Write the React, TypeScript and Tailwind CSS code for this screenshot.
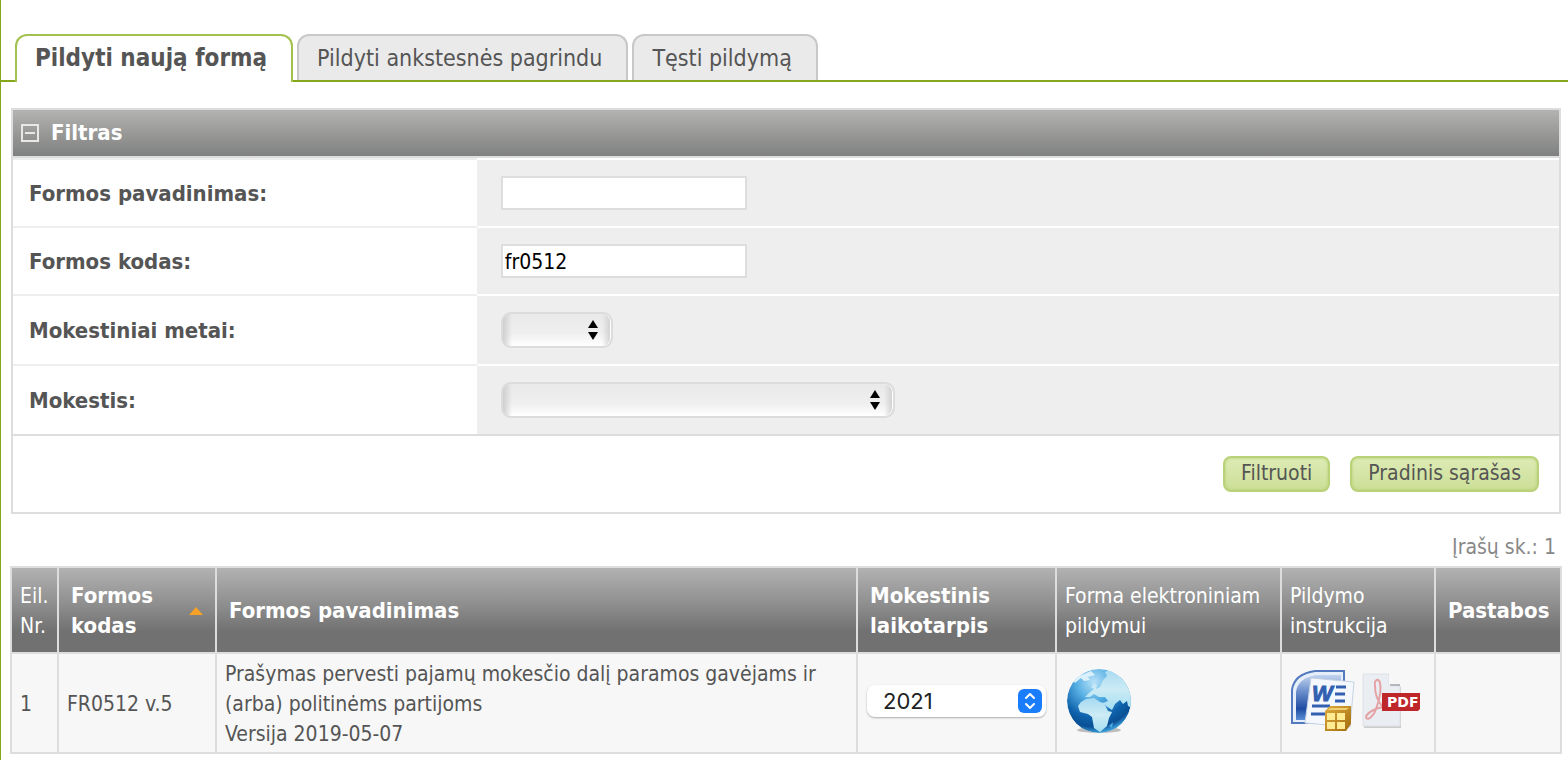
import { useState } from "react";
import type { ReactNode } from "react";
import clsx from "clsx";

const TABS = ["Pildyti naują formą", "Pildyti ankstesnės pagrindu", "Tęsti pildymą"];

function Tab({ label, active, onClick }: { label: string; active: boolean; onClick: () => void }) {
  return (
    <button
      type="button"
      role="tab"
      aria-selected={active}
      onClick={onClick}
      className={clsx(
        "rounded-t-xl border-2 border-b-0 pr-6 pl-[18px] leading-[44px]",
        active
          ? "-mb-[2px] border-[#a3c14f] bg-white pb-[2px] text-[24px] font-bold"
          : "border-[#c8c8c8] bg-[#eaeaea] text-[23px]",
      )}
    >
      {label}
    </button>
  );
}

function FilterRow({ id, label, children }: { id: string; label: string; children: ReactNode }) {
  return (
    <div className="flex">
      <label
        htmlFor={id}
        className="flex w-[30%] items-center border-t-2 border-[#eeeeee] px-4 pt-[2px] text-[22px] font-bold"
      >
        {label}
      </label>
      <div className="flex-1 border-t-2 border-white bg-[#eeeeee] px-6 py-4">{children}</div>
    </div>
  );
}

function TextField({ id, defaultValue }: { id: string; defaultValue?: string }) {
  return (
    <input
      id={id}
      type="text"
      defaultValue={defaultValue}
      className="block h-[34px] w-[246px] border-2 border-[#dddddd] bg-white px-[2px] pt-[2px] text-black outline-none"
    />
  );
}

function GreySelect({ id, className }: { id: string; className: string }) {
  return (
    <div className={clsx("relative h-9", className)}>
      <select
        id={id}
        className="h-full w-full appearance-none rounded-[10px] border-2 border-[#dcdcdc] bg-[linear-gradient(90deg,#cfcfcf,transparent_9px,transparent_calc(100%-9px),#cfcfcf),linear-gradient(#e9e9e9,#efefef_60%,#ffffff)] shadow-[inset_-1px_0_0_#ffffff] outline-none"
      >
        <option value="" />
      </select>
      <svg
        className="pointer-events-none absolute top-2 right-[15px]"
        width="10"
        height="20"
        viewBox="0 0 10 20"
      >
        <path d="M5 0 10 8H0ZM5 20 0 12H10Z" />
      </svg>
    </div>
  );
}

function GreenButton({ children }: { children: ReactNode }) {
  return (
    <button
      type="button"
      className="h-9 rounded-lg border-2 border-[#b9d27a] bg-linear-to-b from-[#deebb5] to-[#cbdf97] px-4 pb-[2px] leading-7 shadow-[inset_0_0_3px_#b4ce70]"
    >
      {children}
    </button>
  );
}

function GlobeIcon() {
  return (
    <svg className="block" width="66" height="66" viewBox="0 0 66 66" aria-hidden="true">
      <defs>
        <radialGradient id="sea" cx="42%" cy="20%" r="80%">
          <stop offset="0" stopColor="#b9e2f8" />
          <stop offset=".35" stopColor="#55aee3" />
          <stop offset=".7" stopColor="#0e62ab" />
          <stop offset=".88" stopColor="#0a4f94" />
          <stop offset="1" stopColor="#3fa4df" />
        </radialGradient>
        <linearGradient id="land" x1="0" y1="0" x2="0" y2="1">
          <stop offset="0" stopColor="#a8daf2" />
          <stop offset=".5" stopColor="#ccebf5" />
          <stop offset="1" stopColor="#a5def2" />
        </linearGradient>
        <clipPath id="ball">
          <circle cx="33" cy="33" r="32" />
        </clipPath>
      </defs>
      <ellipse cx="33" cy="62" rx="22" ry="3" fill="#bdbdbd" />
      <g clipPath="url(#ball)">
        <circle cx="33" cy="33" r="32" fill="url(#sea)" />
        <path
          d="M39 4 45 1 66 14V40L62 38 61 33 57 36 54 32 49 36 46 42 40 38 37 35 42 33 39 29 33 29 28 26 24 29 19 29 23 25 28 21 25 19 28 15 31 17 30 21 34 19 37 12 41 8Z"
          fill="url(#land)"
        />
        <path
          d="M20 31 28 30 34 34 38 35 42 43 46 44 43 50 41 58 34 64 28 60 26 49 22 46 14 44 12 38 15 34Z"
          fill="url(#land)"
        />
        <path d="M7 12 12 8 18 6 25 3 29 7 22 9 24 12 18 13 15 10 9 15Z" fill="#d9f0fa" />
        <path d="M43 58 47 54 46 60Z" fill="#4aa9dd" />
      </g>
    </svg>
  );
}

function WordIcon() {
  return (
    <svg className="block" width="64" height="62" viewBox="0 0 64 62" aria-hidden="true">
      <defs>
        <linearGradient id="wordBlue" x1="0" y1="0" x2="0" y2="1">
          <stop offset="0" stopColor="#c3d4ee" />
          <stop offset=".35" stopColor="#6f92ce" />
          <stop offset=".75" stopColor="#1f4ca3" />
          <stop offset="1" stopColor="#5c8fd6" />
        </linearGradient>
        <linearGradient id="gold" x1="0" y1="0" x2="1" y2="1">
          <stop offset="0" stopColor="#dfac3f" />
          <stop offset="1" stopColor="#a36b0e" />
        </linearGradient>
      </defs>
      <path d="M1 53V20Q3 4 24 1H53V53Z" fill="#e6eefa" stroke="#5379be" strokeWidth="2" />
      <path d="M5 50V22Q7 8 25 5H50V50Z" fill="url(#wordBlue)" />
      <path d="M20 8 63 12 59 57 14 53Z" fill="#f4f8fd" stroke="#c6d3e4" />
      <text
        x="21"
        y="31"
        fontSize="22"
        fontWeight="bold"
        fontStyle="italic"
        fontFamily="Liberation Sans, sans-serif"
        fill="#335fb0"
        stroke="#335fb0"
      >
        W
      </text>
      <path
        d="M45 17H55M44 24H54M44 31H54M21 36H39M20 44H36"
        stroke="#335fb0"
        strokeWidth="3"
      />
      <path d="M34 41 39 36H60V54L55 61H34Z" fill="url(#gold)" />
      <path d="M36 43H44V50H36ZM46 43H54V50H46ZM36 52H44V59H36ZM46 52H54V59H46Z" fill="#ffeb91" />
      <path d="M36 40 40 38H58L55 40Z" fill="#f0ce72" />
    </svg>
  );
}

function PdfIcon() {
  return (
    <svg className="block" width="60" height="56" viewBox="0 0 60 56" aria-hidden="true">
      <path d="M3 3H29L40 14V55H3Z" fill="#cccccc" />
      <path d="M2 1H28V13H39V53H2Z" fill="#eaeef3" stroke="#dde1e7" />
      <path d="M28 1 39 13H28Z" fill="#f7f7f7" />
      <path d="M29 12H39" stroke="#b4b8bc" strokeWidth="2" />
      <path
        d="M22 34C16 35 6 39 5 44C6 49 13 43 15 36C18 28 21 19 19 10C18 5 13 6 14 13C14 21 16 28 22 34Z"
        fill="none"
        stroke="#e5a2a5"
        strokeWidth="2"
      />
      <path d="M21 20H59V36L57 38H21Z" fill="#bf2629" />
      <text
        x="26"
        y="34"
        fontSize="14"
        fontWeight="bold"
        fontFamily="DejaVu Sans, sans-serif"
        fill="#ffffff"
      >
        PDF
      </text>
    </svg>
  );
}

const HEAD_CELL = "border-2 border-[#dddddd] px-2 pt-[13px] pb-[11px]";
const HEAD_SORT = "border-2 border-[#dddddd] px-3 pt-[13px] pb-[11px] text-[22px] font-bold";
const CELL = "border-2 border-[#dddddd] px-2 pt-[5px] pb-[3px]";
const ICON_CELL = "border-2 border-[#dddddd] px-[9px] pb-1";

export default function App() {
  const [tab, setTab] = useState(0);
  const [open, setOpen] = useState(true);

  return (
    <main className="min-h-screen border-l border-[#86a71c] bg-white pt-[34px] font-['DejaVu_Sans_Condensed','DejaVu_Sans',sans-serif] text-[21px] leading-[30px] text-[#555555]">
      <div role="tablist" className="flex gap-1 border-b-2 border-[#86a71c] pl-[14px]">
        {TABS.map((label, i) => (
          <Tab key={label} label={label} active={i === tab} onClick={() => setTab(i)} />
        ))}
      </div>

      <form
        className="mt-[26px] mr-[7px] ml-[10px] border-2 border-[#dddddd]"
        onSubmit={(e) => e.preventDefault()}
      >
        <button
          type="button"
          aria-expanded={open}
          onClick={() => setOpen(!open)}
          className="flex h-12 w-full items-center gap-3 border-b-2 border-[#dddddd] bg-linear-to-b from-[#b3b3b3] via-[#999997] to-[#7f8081] px-2 text-[22px] font-bold text-white"
        >
          <svg width="18" height="18" viewBox="0 0 18 18" fill="none" stroke="#e8e8e8" strokeWidth="2">
            <path d="M1 1H17V17H1ZM4 9H14" />
          </svg>
          Filtras
        </button>
        {open && (
          <>
            <div>
              <FilterRow id="name" label="Formos pavadinimas:">
                <TextField id="name" />
              </FilterRow>
              <FilterRow id="code" label="Formos kodas:">
                <TextField id="code" defaultValue="fr0512" />
              </FilterRow>
              <FilterRow id="year" label="Mokestiniai metai:">
                <GreySelect id="year" className="w-28" />
              </FilterRow>
              <FilterRow id="tax" label="Mokestis:">
                <GreySelect id="tax" className="w-[394px]" />
              </FilterRow>
            </div>
            <div className="flex justify-end gap-5 border-t-2 border-[#dddddd] bg-white px-5 py-5">
              <GreenButton>Filtruoti</GreenButton>
              <GreenButton>Pradinis sąrašas</GreenButton>
            </div>
          </>
        )}
      </form>

      <p className="mt-[18px] pr-3 pb-1 text-right text-[#888888]">Įrašų sk.: 1</p>

      <div className="mr-[6px] ml-[9px]">
        <table className="w-full table-fixed border-collapse text-left">
          <colgroup>
            <col className="w-[47px]" />
            <col className="w-[158px]" />
            <col />
            <col className="w-[199px]" />
            <col className="w-[225px]" />
            <col className="w-[154px]" />
            <col className="w-[126px]" />
          </colgroup>
          <thead className="bg-linear-to-b from-[#b3b3b3] via-[#8c8d8c] via-45% to-[#717171] to-75% text-white [&_th]:font-normal [&_th.font-bold]:font-bold">
            <tr>
              <th className={HEAD_CELL}>Eil. Nr.</th>
              <th className={HEAD_SORT} aria-sort="ascending">
                <span className="flex items-center justify-between">
                  <span className="w-24">Formos kodas</span>
                  <svg width="14" height="8" viewBox="0 0 14 8" fill="#f7a128">
                    <path d="M7 0 14 8H0Z" />
                  </svg>
                </span>
              </th>
              <th className={HEAD_SORT}>Formos pavadinimas</th>
              <th className={HEAD_SORT}>Mokestinis laikotarpis</th>
              <th className={HEAD_CELL}>Forma elektroniniam pildymui</th>
              <th className={HEAD_CELL}>Pildymo instrukcija</th>
              <th className={HEAD_SORT}>Pastabos</th>
            </tr>
          </thead>
          <tbody className="bg-[#f7f7f7]">
            <tr>
              <td className={CELL}>1</td>
              <td className={CELL}>FR0512 v.5</td>
              <td className={CELL}>
                Prašymas pervesti pajamų mokesčio dalį paramos gavėjams ir (arba) politinėms
                partijoms
                <br />
                Versija 2019-05-07
              </td>
              <td className={ICON_CELL}>
                <div className="relative">
                  <select
                    aria-label="Mokestinis laikotarpis"
                    defaultValue="2021"
                    className="block h-8 w-full appearance-none rounded-lg bg-white pl-4 font-[Inter,sans-serif] text-[22px] text-[#222222] shadow-[0_1px_2px_rgba(0,0,0,0.3)] outline-none"
                  >
                    <option>2021</option>
                    <option>2020</option>
                    <option>2019</option>
                  </select>
                  <svg
                    className="pointer-events-none absolute top-1 right-1"
                    width="24"
                    height="24"
                    viewBox="0 0 24 24"
                    fill="none"
                  >
                    <rect width="24" height="24" rx="6" fill="#1a7dfb" />
                    <path
                      d="M8 9 12 5 16 9M8 15 12 19 16 15"
                      stroke="#ffffff"
                      strokeWidth="2"
                      strokeLinecap="round"
                      strokeLinejoin="round"
                    />
                  </svg>
                </div>
              </td>
              <td className={ICON_CELL}>
                <a href="#pildyti" aria-label="Pildyti formą" className="inline-block align-middle">
                  <GlobeIcon />
                </a>
              </td>
              <td className={ICON_CELL}>
                <span className="flex items-center gap-[6px]">
                  <a href="#word" aria-label="Word">
                    <WordIcon />
                  </a>
                  <a href="#pdf" aria-label="PDF">
                    <PdfIcon />
                  </a>
                </span>
              </td>
              <td className={CELL} />
            </tr>
          </tbody>
        </table>
      </div>
    </main>
  );
}
